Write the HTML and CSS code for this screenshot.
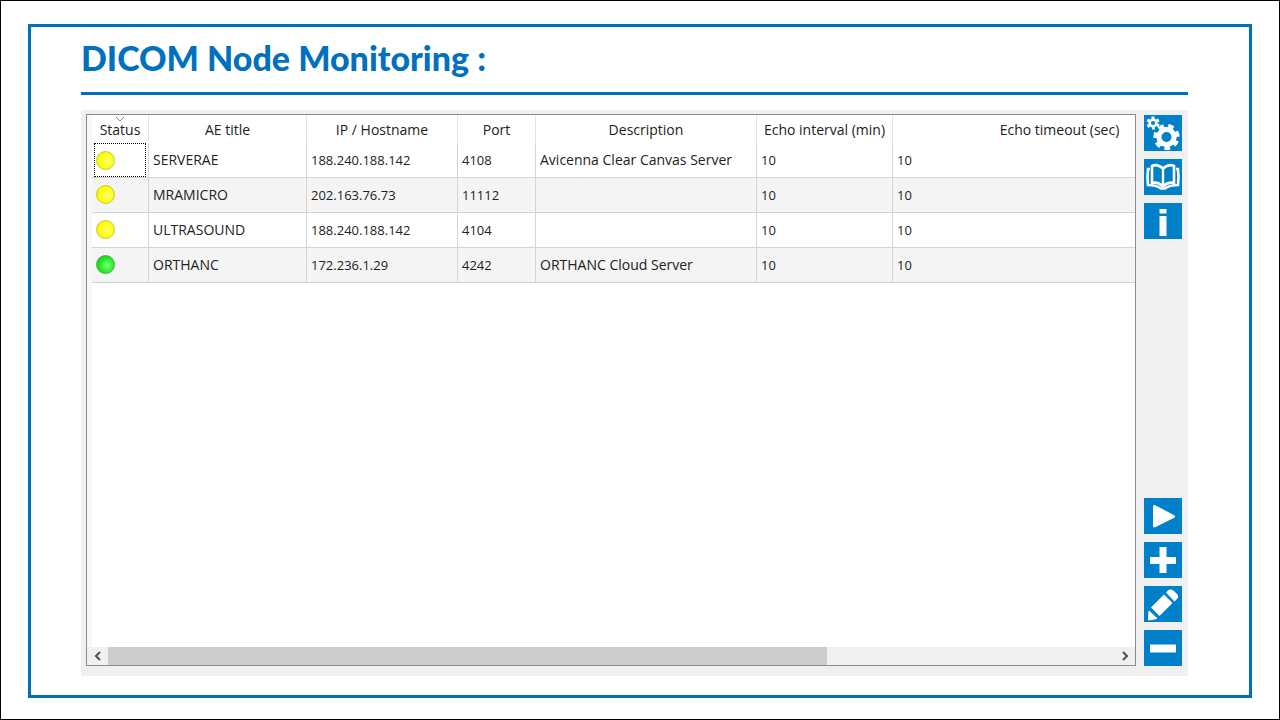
FILE: index.html
```html
<!DOCTYPE html>
<html lang="en">
<head>
    <meta charset="UTF-8">
    <meta name="viewport" content="width=device-width, initial-scale=1.0">
    <title>DICOM Node Monitoring</title>
    <link rel="stylesheet" href="styles.css">
</head>
<body>
    <main class="frame">
        <h1>DICOM Node Monitoring :</h1>

        <div class="panel">
            <div class="list">
                <div class="table-wrap">
                    <table>
                        <colgroup>
                            <col class="col-status">
                            <col class="col-title">
                            <col class="col-host">
                            <col class="col-port">
                            <col class="col-desc">
                            <col class="col-interval">
                            <col class="col-timeout">
                        </colgroup>
                        <thead>
                            <tr>
                                <th class="sorted">Status
                                    <svg class="sort" width="10" height="6" viewBox="0 0 10 6"><path d="M1 1l4 4 4-4" fill="none" stroke="#888"/></svg>
                                </th>
                                <th>AE title</th>
                                <th>IP / Hostname</th>
                                <th>Port</th>
                                <th>Description</th>
                                <th>Echo interval (min)</th>
                                <th>Echo timeout (sec)</th>
                            </tr>
                        </thead>
                        <tbody>
                            <tr>
                                <td class="status"><div class="focused"><span class="led yellow"></span></div></td>
                                <td>SERVERAE</td>
                                <td class="num">188.240.188.142</td>
                                <td class="num">4108</td>
                                <td>Avicenna Clear Canvas Server</td>
                                <td class="num">10</td>
                                <td class="num">10</td>
                            </tr>
                            <tr>
                                <td><span class="led yellow"></span></td>
                                <td>MRAMICRO</td>
                                <td class="num">202.163.76.73</td>
                                <td class="num">11112</td>
                                <td></td>
                                <td class="num">10</td>
                                <td class="num">10</td>
                            </tr>
                            <tr>
                                <td><span class="led yellow"></span></td>
                                <td>ULTRASOUND</td>
                                <td class="num">188.240.188.142</td>
                                <td class="num">4104</td>
                                <td></td>
                                <td class="num">10</td>
                                <td class="num">10</td>
                            </tr>
                            <tr>
                                <td><span class="led green"></span></td>
                                <td>ORTHANC</td>
                                <td class="num">172.236.1.29</td>
                                <td class="num">4242</td>
                                <td>ORTHANC Cloud Server</td>
                                <td class="num">10</td>
                                <td class="num">10</td>
                            </tr>
                        </tbody>
                    </table>
                </div>
                <div class="scrollbar">
                    <button class="arrow" aria-label="Scroll left">
                        <svg width="8" height="10" viewBox="0 0 8 10"><path d="M6 1L2 5l4 4" fill="none" stroke="#505050" stroke-width="2"/></svg>
                    </button>
                    <div class="track"><div class="thumb"></div></div>
                    <button class="arrow" aria-label="Scroll right">
                        <svg width="8" height="10" viewBox="0 0 8 10"><path d="M2 1l4 4-4 4" fill="none" stroke="#505050" stroke-width="2"/></svg>
                    </button>
                </div>
            </div>

            <div class="toolbar">
                <button class="tool" aria-label="Settings">
                    <svg viewBox="0 0 38 36">
                        <g fill="none" stroke="#fff">
                            <circle cx="9" cy="8" r="3.4" stroke-width="2.6"/>
                            <circle cx="9" cy="8" r="5.4" stroke-width="2.4" stroke-dasharray="2.9 2.755" transform="rotate(8 9 8)"/>
                            <circle cx="22.5" cy="22" r="7.6" stroke-width="5.2"/>
                            <circle cx="22.5" cy="22" r="11.3" stroke-width="3.6" stroke-dasharray="5.6 4.543" transform="rotate(20 22.5 22)"/>
                        </g>
                    </svg>
                </button>
                <button class="tool" aria-label="Log book">
                    <svg viewBox="0 0 38 36">
                        <path d="M6 10H4Q3 18 4 26q8 0 13 3.500h4Q26 26 34 26q1-8 0-16h-2" fill="none" stroke="#fff" stroke-width="2.600"/>
                        <path d="M19 9.500Q13 4.500 8 7v17q6-1.500 11 3.500 5-5 11-3.500V7q-5-2.500-11 2.500z" fill="none" stroke="#fff" stroke-width="2.600"/>
                        <path d="M19 9v19" stroke="#fff" stroke-width="2.400"/>
                    </svg>
                </button>
                <button class="tool" aria-label="Information">
                    <svg viewBox="0 0 38 36"><path d="M15.500 6h7v4.500h-7zM15.500 13h7v20h-7z" fill="#fff"/></svg>
                </button>
                <button class="tool first-action" aria-label="Start">
                    <svg viewBox="0 0 38 36"><path d="M10.500 8.500v19.500l19-9.500z" fill="#fff" stroke="#fff" stroke-width="3" stroke-linejoin="round"/></svg>
                </button>
                <button class="tool" aria-label="Add node">
                    <svg viewBox="0 0 38 36"><path d="M15.500 5h7v10h9.500v7h-9.500v9h-7v-9H6v-7h9.500z" fill="#fff"/></svg>
                </button>
                <button class="tool" aria-label="Edit node">
                    <svg viewBox="0 0 38 36">
                        <path d="M20 8.500l8.500 8.500L15.500 30 7 21.500z" fill="#fff"/>
                        <path d="M22 6.500l2-2q2.500-2 6 .5l2.500 2.500q3 3 .5 5.500l-2.500 2.500z" fill="#fff"/>
                        <path d="M5 25l8 7.500-8.500 1.500z" fill="#fff" stroke="#fff" stroke-linejoin="round"/>
                    </svg>
                </button>
                <button class="tool" aria-label="Remove node">
                    <svg viewBox="0 0 38 36"><path d="M6 14.500h26v8H6z" fill="#fff"/></svg>
                </button>
            </div>
        </div>
    </main>
</body>
</html>
```
FILE: styles.css
```css
* {
    box-sizing: border-box;
}
body {
    margin: 0;
    min-height: 100vh;
    display: flex;
    padding: 23px 27px 21px;
    border: 1px solid #000;
    background-color: #fff;
    font-family: "Open Sans", "Noto Sans", sans-serif;
    font-size: 14px;
    color: #222;
}
.frame {
    flex: 1;
    min-width: 0;
    display: flex;
    flex-direction: column;
    border: 3px solid #0070b8;
    padding: 10px 61px 19px 50px;
}
h1 {
    margin: 0 0 15px;
    padding-bottom: 13px;
    border-bottom: 3px solid #0070b8;
    font-family: Lato, sans-serif;
    font-size: 34px;
    font-weight: 900;
    line-height: 42px;
    color: #0070c0;
}
.panel {
    flex: 1;
    display: flex;
    gap: 8px;
    padding: 4px 6px 10px 5px;
    background-color: #f0f0f0;
}
.list {
    flex: 1;
    min-width: 0;
    display: flex;
    flex-direction: column;
    border: 1px solid #8c8c8c;
    background-color: #fff;
}
.table-wrap {
    flex: 1;
    overflow: hidden;
    border-left: 5px solid #f8f8f8;
}
table {
    width: 1135px;
    table-layout: fixed;
    border-collapse: separate;
    border-spacing: 0;
}
.col-status {
    width: 57px;
}
.col-title {
    width: 158px;
}
.col-host {
    width: 151px;
}
.col-port {
    width: 78px;
}
.col-desc {
    width: 221px;
}
.col-interval {
    width: 136px;
}
.col-timeout {
    width: 334px;
}
th {
    height: 28px;
    padding: 1px 0 0;
    border-right: 1px solid #e5e5e5;
    font-weight: 400;
    white-space: nowrap;
}
.sorted {
    position: relative;
}
.sort {
    position: absolute;
    top: 1px;
    left: 23px;
}
td {
    height: 35px;
    padding: 0 4px 1px;
    border-right: 1px solid #d4d4d4;
    border-bottom: 1px solid #d4d4d4;
    white-space: nowrap;
}
tbody tr:nth-child(even) {
    background-color: #f4f4f4;
}
.num {
    padding-bottom: 0;
    font-size: 13px;
}
.status {
    padding: 0 2px;
}
.focused {
    display: flex;
    align-items: center;
    height: 34px;
    padding-left: 1px;
    border: 1px dotted #000;
}
.led {
    display: block;
    width: 19px;
    height: 19px;
    border-radius: 50%;
}
.yellow {
    border: 1px solid #c9c93c;
    background: radial-gradient(circle at 60% 55%, #ffff70, #fdfd00 60%, #e2e200);
}
.green {
    border: 1px solid #4bb04b;
    background: radial-gradient(circle at 60% 55%, #7dff7d, #1ee81e 55%, #10bd10);
}
.scrollbar {
    display: flex;
    height: 18px;
    background-color: #f0f0f0;
}
.arrow {
    width: 21px;
    padding: 0;
    border: none;
    background: none;
    display: flex;
    align-items: center;
    justify-content: center;
}
.track {
    flex: 1;
}
.thumb {
    width: calc(100% * 5 / 7);
    height: 100%;
    background-color: #cdcdcd;
}
.toolbar {
    display: flex;
    flex-direction: column;
    gap: 8px;
    padding-top: 1px;
}
.tool {
    width: 38px;
    height: 36px;
    padding: 0;
    border: none;
    background-color: #0080c8;
}
.tool svg {
    display: block;
    width: 38px;
    height: 36px;
}
.first-action {
    margin-top: auto;
}
```
